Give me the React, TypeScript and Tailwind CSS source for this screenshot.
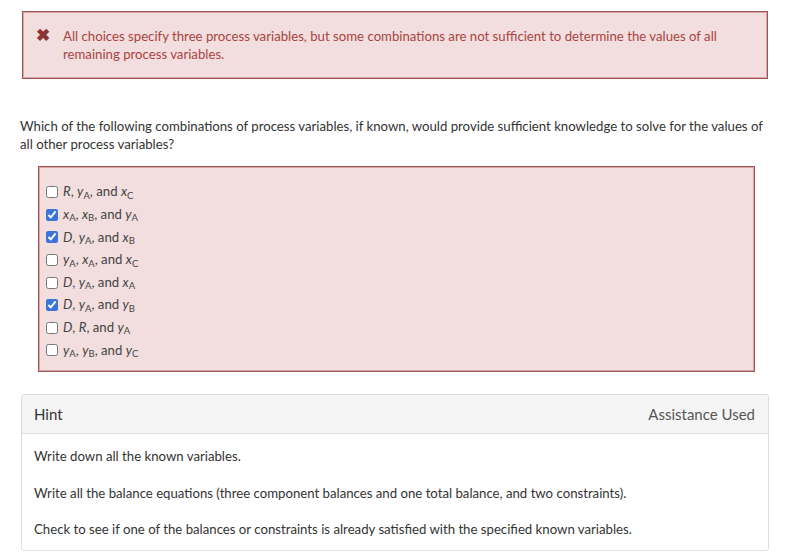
import React from 'react';

type Part = { t: string; sub?: string; it?: boolean };

const CHOICES: { parts: Part[]; checked: boolean }[] = [
  { parts: [{ t: 'R', it: true }, { t: ', ' }, { t: 'y', sub: 'A', it: true }, { t: ', and ' }, { t: 'x', sub: 'C', it: true }], checked: false },
  { parts: [{ t: 'x', sub: 'A', it: true }, { t: ', ' }, { t: 'x', sub: 'B', it: true }, { t: ', and ' }, { t: 'y', sub: 'A', it: true }], checked: true },
  { parts: [{ t: 'D', it: true }, { t: ', ' }, { t: 'y', sub: 'A', it: true }, { t: ', and ' }, { t: 'x', sub: 'B', it: true }], checked: true },
  { parts: [{ t: 'y', sub: 'A', it: true }, { t: ', ' }, { t: 'x', sub: 'A', it: true }, { t: ', and ' }, { t: 'x', sub: 'C', it: true }], checked: false },
  { parts: [{ t: 'D', it: true }, { t: ', ' }, { t: 'y', sub: 'A', it: true }, { t: ', and ' }, { t: 'x', sub: 'A', it: true }], checked: false },
  { parts: [{ t: 'D', it: true }, { t: ', ' }, { t: 'y', sub: 'A', it: true }, { t: ', and ' }, { t: 'y', sub: 'B', it: true }], checked: true },
  { parts: [{ t: 'D', it: true }, { t: ', ' }, { t: 'R', it: true }, { t: ', and ' }, { t: 'y', sub: 'A', it: true }], checked: false },
  { parts: [{ t: 'y', sub: 'A', it: true }, { t: ', ' }, { t: 'y', sub: 'B', it: true }, { t: ', and ' }, { t: 'y', sub: 'C', it: true }], checked: false },
];

const HINTS = [
  'Write down all the known variables.',
  'Write all the balance equations (three component balances and one total balance, and two constraints).',
  'Check to see if one of the balances or constraints is already satisfied with the specified known variables.',
];

export default function App() {
  return (
    <div className="w-[787px] h-[557px] bg-white overflow-hidden text-[#333] text-[13.2px] font-['Lato','Liberation_Sans',sans-serif]">
      <div className="pt-[11px] pl-[22px] pr-[19px]">
        {/* Feedback alert */}
        <div className="h-[68px] bg-[#f2dede] border border-[#9e5454] shadow-[inset_0_0_0_1px_#d8a8a8] flex items-start pt-[14px] pl-[13px] pr-[40px] text-[#a94442]">
          <span className="w-[27px] shrink-0 text-[17px] leading-[18px] font-bold text-[#8b3434]">✖</span>
          <p className="leading-[18px] pt-[1px]">
            All choices specify three process variables, but some combinations are not sufficient to determine the values of all remaining process variables.
          </p>
        </div>
      </div>

      <p className="mt-[38px] px-[20px] leading-[18px] pr-[20px]">
        Which of the following combinations of process variables, if known, would provide sufficient knowledge to solve for the values of all other process variables?
      </p>

      {/* Choices */}
      <div className="mt-[13px] ml-[38px] w-[717px] h-[206px] bg-[#f2dede] border border-[#9e5454] shadow-[inset_0_0_0_1px_#d8a8a8] pt-[14px] pl-[7px]">
        <div className="flex flex-col">
          {CHOICES.map((c, i) => (
            <label key={i} className="flex items-center h-[22.6px] gap-[5px]">
              <input
                type="checkbox"
                defaultChecked={c.checked}
                className="w-[12px] h-[12px] m-0 accent-[#3d74d9]"
              />
              <span className="text-[13.2px] text-[#444]">
                {c.parts.map((p, j) =>
                  p.it ? (
                    <span key={j} className="italic">
                      {p.t}
                      {p.sub && <sub className="not-italic text-[9.5px]">{p.sub}</sub>}
                    </span>
                  ) : (
                    <span key={j}>{p.t}</span>
                  )
                )}
              </span>
            </label>
          ))}
        </div>
      </div>

      {/* Hint panel */}
      <div className="mt-[22px] ml-[21px] w-[748px] h-[157px] border border-[#dddddd] rounded-[3px] overflow-hidden">
        <div className="h-[39px] bg-[#f5f5f5] border-b border-[#dddddd] flex items-center justify-between pl-[12px] pr-[13px] text-[15px] text-[#333]">
          <span>Hint</span>
          <span className="text-[#555]">Assistance Used</span>
        </div>
        <div className="pl-[12px] pt-[13px] flex flex-col gap-[18.5px]">
          {HINTS.map((h) => (
            <p key={h} className="leading-[18px]">{h}</p>
          ))}
        </div>
      </div>
    </div>
  );
}
